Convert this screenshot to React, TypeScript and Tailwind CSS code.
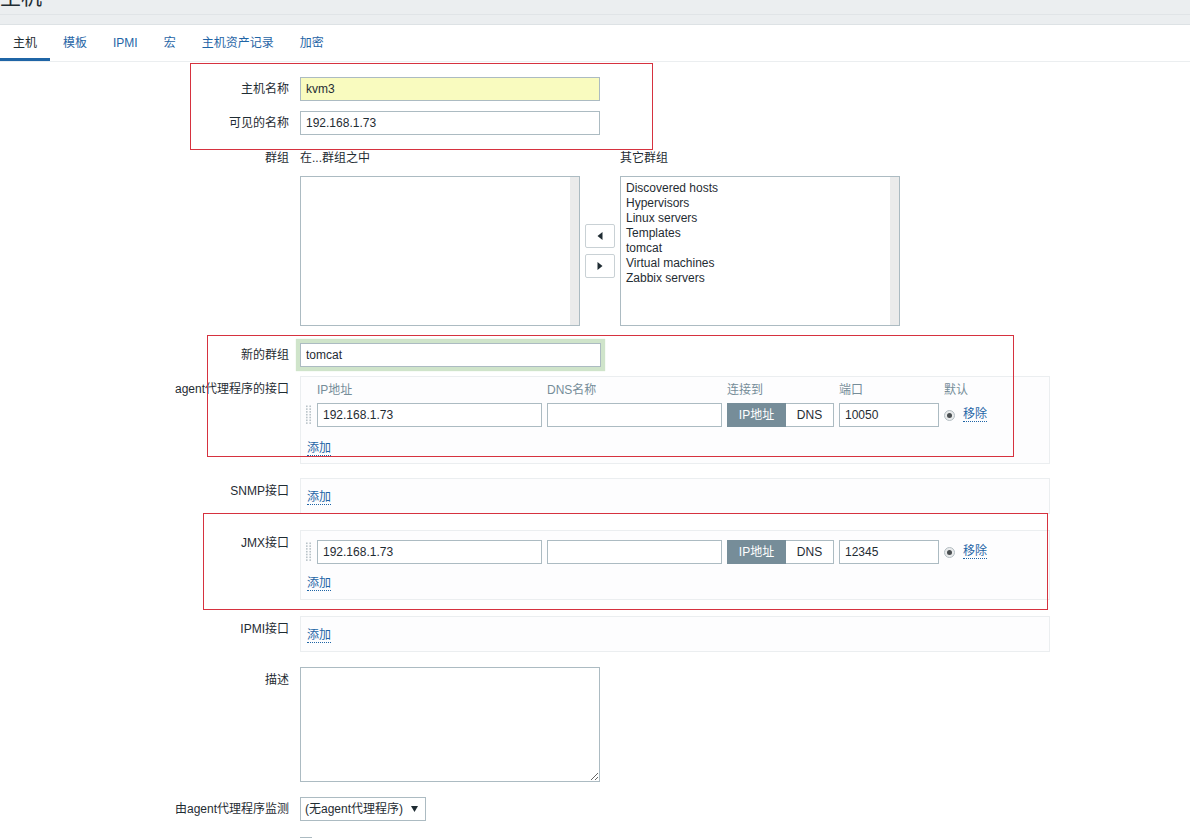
import React from "react";

const baseInput =
  "h-[24px] border border-[#acbbc2] px-[5px] text-[12px] text-[#1f2c33] outline-none";
const inputCls = baseInput + " bg-white";

function Handle() {
  const ys = [0, 1, 2, 3, 4, 5, 6];
  return (
    <svg width="7" height="20" viewBox="0 0 7 20" className="block">
      {ys.map((i) => (
        <g key={i}>
          <rect x="1" y={0.5 + i * 2.8} width="1.6" height="1.6" fill="#b9c3c8" />
          <rect x="4.4" y={0.5 + i * 2.8} width="1.6" height="1.6" fill="#b9c3c8" />
        </g>
      ))}
    </svg>
  );
}

function Radio() {
  return (
    <span className="flex h-[11px] w-[11px] items-center justify-center rounded-full border border-[#b4bec3] bg-[#e9ebec]">
      <span className="h-[5px] w-[5px] rounded-full bg-[#4a4f52]" />
    </span>
  );
}

function AddLink() {
  return (
    <div className="flex h-[20px] items-center pl-[2px]">
      <span className="border-b border-dotted border-[#1f65a6] leading-[13px] text-[#1f65a6]">添加</span>
    </div>
  );
}

function IfaceRow({ port }: { port: string }) {
  return (
    <div className="grid grid-cols-[7px_225px_175px_107px_100px_auto] items-center gap-x-[5px]">
      <Handle />
      <input className={inputCls + " w-full"} defaultValue="192.168.1.73" readOnly />
      <input className={inputCls + " w-full"} defaultValue="" readOnly />
      <div className="flex h-[24px]">
        <span className="flex w-[59px] items-center justify-center bg-[#768d99] text-white">IP地址</span>
        <span className="flex flex-1 items-center justify-center border border-l-0 border-[#acbbc2] bg-white text-[#1f2c33]">
          DNS
        </span>
      </div>
      <input className={inputCls + " w-full"} defaultValue={port} readOnly />
      <div className="flex items-center gap-[8px] pl-[-1px]">
        <Radio />
        <span className="border-b border-dotted border-[#1f65a6] leading-[13px] text-[#1f65a6]">移除</span>
      </div>
    </div>
  );
}

function Listbox({ items }: { items: string[] }) {
  return (
    <div className="flex h-[150px] w-[280px] border border-[#acbbc2] bg-white">
      <div className="flex-1 pl-[5px] pt-[4px] leading-[15px] text-[#1f2c33]">
        {items.map((t) => (
          <div key={t}>{t}</div>
        ))}
      </div>
      <div className="w-[9px] bg-[#ebebeb]" />
    </div>
  );
}

function Arrow({ dir }: { dir: "left" | "right" }) {
  return (
    <div className="flex h-[24px] w-[30px] items-center justify-center rounded-[2px] border border-[#c9d1d5] bg-white">
      <svg width="6" height="8" viewBox="0 0 6 8">
        {dir === "left" ? (
          <polygon points="5.5,0 5.5,8 0.5,4" fill="#1f2c33" />
        ) : (
          <polygon points="0.5,0 0.5,8 5.5,4" fill="#1f2c33" />
        )}
      </svg>
    </div>
  );
}

function Label({ children, center = false }: { children: React.ReactNode; center?: boolean }) {
  return (
    <div
      className={
        "w-[300px] shrink-0 pr-[11px] text-right leading-[14px] " + (center ? "self-center" : "pt-[6px]")
      }
    >
      {children}
    </div>
  );
}

export default function App() {
  const tabs = ["主机", "模板", "IPMI", "宏", "主机资产记录", "加密"];
  return (
    <div className="relative min-h-[838px] bg-white font-['Liberation_Sans','Noto_Sans_CJK_SC',sans-serif] text-[12px] text-[#1f2c33]">
      {/* page header */}
      <div className="h-[15px] overflow-hidden border-b border-[#e0e4e7] bg-[#ebeef0]">
        <div className="-mt-[14px] pl-0 text-[21px] leading-[21px] text-[#1f2c33]">主机</div>
      </div>
      <div className="h-[10px] border-b border-[#dde2e5] bg-[#ebeef0]" />

      {/* tabs */}
      <div className="flex h-[37px] border-b border-[#ebeef0]">
        {tabs.map((t, i) => (
          <div
            key={t}
            className={
              "flex h-[36px] items-center border-b-[3px] px-[13px] pt-[3px] " +
              (i === 0 ? "border-[#1f65a6] text-[#1f2c33]" : "border-transparent text-[#1f65a6]")
            }
          >
            {t}
          </div>
        ))}
      </div>

      {/* form */}
      <div className="flex flex-col pt-[15px]">
        <div className="flex">
          <Label center>主机名称</Label>
          <input className={baseInput + " w-[300px] bg-[#f9fbbf]"} defaultValue="kvm3" readOnly />
        </div>
        <div className="mt-[10px] flex">
          <Label center>可见的名称</Label>
          <input className={inputCls + " w-[300px]"} defaultValue="192.168.1.73" readOnly />
        </div>

        <div className="mt-[15px] flex">
          <div className="w-[300px] shrink-0 pr-[11px] text-right leading-[16px]">群组</div>
          <div className="flex flex-col">
            <div className="flex leading-[16px]">
              <div className="w-[320px]">在...群组之中</div>
              <div>其它群组</div>
            </div>
            <div className="mt-[10px] flex items-center">
              <Listbox items={[]} />
              <div className="ml-[5px] mr-[5px] flex flex-col gap-[6px]">
                <Arrow dir="left" />
                <Arrow dir="right" />
              </div>
              <Listbox
                items={[
                  "Discovered hosts",
                  "Hypervisors",
                  "Linux servers",
                  "Templates",
                  "tomcat",
                  "Virtual machines",
                  "Zabbix servers",
                ]}
              />
            </div>
          </div>
        </div>

        <div className="mt-[17px] flex">
          <Label center>新的群组</Label>
          <input
            className={baseInput + " w-[301px] border-[#9fbf98] bg-white shadow-[0_0_1px_4px_#cfe4ca]"}
            defaultValue="tomcat"
            readOnly
          />
        </div>

        <div className="mt-[9px] flex">
          <Label>agent代理程序的接口</Label>
          <div className="w-[750px] border border-[#ebeef0] bg-[#fdfdfe] pb-[4px] pl-[4px] pt-[6px]">
            <div className="grid grid-cols-[7px_225px_175px_107px_100px_auto] gap-x-[5px] leading-[14px] text-[#768d99]">
              <span />
              <span>IP地址</span>
              <span>DNS名称</span>
              <span>连接到</span>
              <span>端口</span>
              <span>默认</span>
            </div>
            <div className="mt-[6px]">
              <IfaceRow port="10050" />
            </div>
            <div className="mt-[12px]">
              <AddLink />
            </div>
          </div>
        </div>

        <div className="mt-[14px] flex">
          <Label>SNMP接口</Label>
          <div className="w-[750px] border border-[#ebeef0] bg-[#fdfdfe] pb-[5px] pl-[4px] pt-[9px]">
            <AddLink />
          </div>
        </div>

        <div className="mt-[16px] flex">
          <Label>JMX接口</Label>
          <div className="w-[750px] border border-[#ebeef0] bg-[#fdfdfe] pb-[5px] pl-[4px] pt-[9px]">
            <IfaceRow port="12345" />
            <div className="mt-[10px]">
              <AddLink />
            </div>
          </div>
        </div>

        <div className="mt-[16px] flex">
          <Label>IPMI接口</Label>
          <div className="w-[750px] border border-[#ebeef0] bg-[#fdfdfe] pb-[5px] pl-[4px] pt-[9px]">
            <AddLink />
          </div>
        </div>

        <div className="mt-[15px] flex">
          <Label>描述</Label>
          <textarea
            className="h-[115px] w-[300px] resize border border-[#acbbc2] bg-white px-[5px] text-[12px] outline-none"
            defaultValue=""
            readOnly
          />
        </div>

        <div className="mt-[15px] flex">
          <Label center>由agent代理程序监测</Label>
          <div className="flex h-[24px] w-[126px] items-center justify-between border border-[#acbbc2] bg-white pl-[4px] pr-[7px]">
            <span>(无agent代理程序)</span>
            <svg width="7" height="6" viewBox="0 0 7 6">
              <polygon points="0,0 7,0 3.5,6" fill="#1f2c33" />
            </svg>
          </div>
        </div>

        <div className="mt-[16px] flex">
          <Label>已启用</Label>
          <div className="h-[12px] w-[12px] border border-[#acbbc2] bg-white" />
        </div>
        <div className="h-[40px]" />
      </div>

      {/* red annotation boxes */}
      <div className="pointer-events-none absolute left-[190px] top-[63px] h-[87px] w-[463px] border border-[#d6323f]" />
      <div className="pointer-events-none absolute left-[207px] top-[335px] h-[122px] w-[807px] border border-[#d6323f]" />
      <div className="pointer-events-none absolute left-[203px] top-[513px] h-[97px] w-[845px] border border-[#d6323f]" />
    </div>
  );
}
